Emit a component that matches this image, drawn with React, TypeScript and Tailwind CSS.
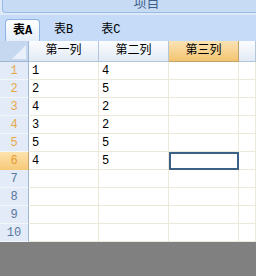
import React from 'react';

const cols = ['第一列', '第二列', '第三列', ''];
const data: [string, string][] = [
    ['1', '4'],
    ['2', '5'],
    ['4', '2'],
    ['3', '2'],
    ['5', '5'],
    ['4', '5'],
];

const font = "font-['SimSun','Liberation_Mono','Noto_Sans_CJK_SC',monospace]";

export default function App() {
    const rows = Array.from({ length: 10 }, (_, i) => i);

    return (
        <div className={`w-[256px] h-[276px] overflow-hidden flex flex-col bg-[#808080] ${font}`}>
            {/* top panel + tab strip */}
            <div className="bg-[#dfe8f6]">
                <div className="ml-[2px] h-[13px] overflow-hidden rounded-bl-[4px] border-l border-b border-[#99bbe8] bg-[#c7dbf4] flex justify-center">
                    <span className="ml-[34px] -mt-[6px] text-[13px] leading-[16px] text-[#3e5f8a] font-['Noto_Sans_CJK_SC',sans-serif]">项目</span>
                </div>
                <div className="mt-[2px] h-[26px] bg-[#c5dbf8] flex items-end pl-[5px] text-[12px] text-black">
                    <div className="w-[35px] h-[22px] rounded-t-[4px] border border-b-0 border-[#8db2e3] bg-gradient-to-b from-white to-[#e5eefa] flex items-center justify-center font-bold">
                        表A
                    </div>
                    <div className="ml-[14px] h-[22px] flex items-center">表B</div>
                    <div className="ml-[28px] h-[22px] flex items-center">表C</div>
                </div>
            </div>

            {/* grid */}
            <div className="grid grid-cols-[29px_70px_70px_70px_1fr] bg-white text-[12px]">
                {/* header */}
                <div className="relative h-[21px] bg-[#c5d8f0] border-r border-b border-[#9eb6ce]">
                    <svg className="absolute right-[2px] bottom-[2px]" width="14" height="14" viewBox="0 0 14 14">
                        <polygon points="14,0 14,14 0,14" fill="#e9f0f9" />
                    </svg>
                </div>
                {cols.map((c, i) => (
                    <div
                        key={i}
                        className={
                            i === 2
                                ? 'h-[21px] flex items-center justify-center border-r border-b border-[#c2a36d] bg-gradient-to-b from-[#fbe3b4] to-[#f3c56f]'
                                : 'h-[21px] flex items-center justify-center border-r border-b border-[#b4c6da] bg-gradient-to-b from-[#fbfdff] to-[#e2eaf4]'
                        }
                    >
                        {c}
                    </div>
                ))}

                {/* body */}
                {rows.map((r) => {
                    const hasData = r < data.length;
                    const active = r === 5;
                    return (
                        <React.Fragment key={r}>
                            <div
                                className={
                                    active
                                        ? 'h-[18px] flex items-center justify-center border-r border-[#c2a36d] bg-gradient-to-b from-[#fde3ad] to-[#f7c978] text-[#e69a2e]'
                                        : `h-[18px] flex items-center justify-center border-r border-b border-r-[#9eb6ce] border-b-[#f3f6fb] bg-[#e2ebf7] ${hasData ? 'text-[#e8a84a]' : 'text-[#57779f]'}`
                                }
                            >
                                {r + 1}
                            </div>
                            {[0, 1, 2, 3].map((c) => (
                                <div
                                    key={c}
                                    className={
                                        active && c === 2
                                            ? 'h-[18px] border-2 border-[#3d6185]'
                                            : 'h-[18px] flex items-center pl-[3px] border-r border-b border-[#ece9d8] text-black'
                                    }
                                >
                                    {hasData && c < 2 ? data[r][c] : ''}
                                </div>
                            ))}
                        </React.Fragment>
                    );
                })}
            </div>
            <div className="flex-1 bg-[#808080]" />
        </div>
    );
}
